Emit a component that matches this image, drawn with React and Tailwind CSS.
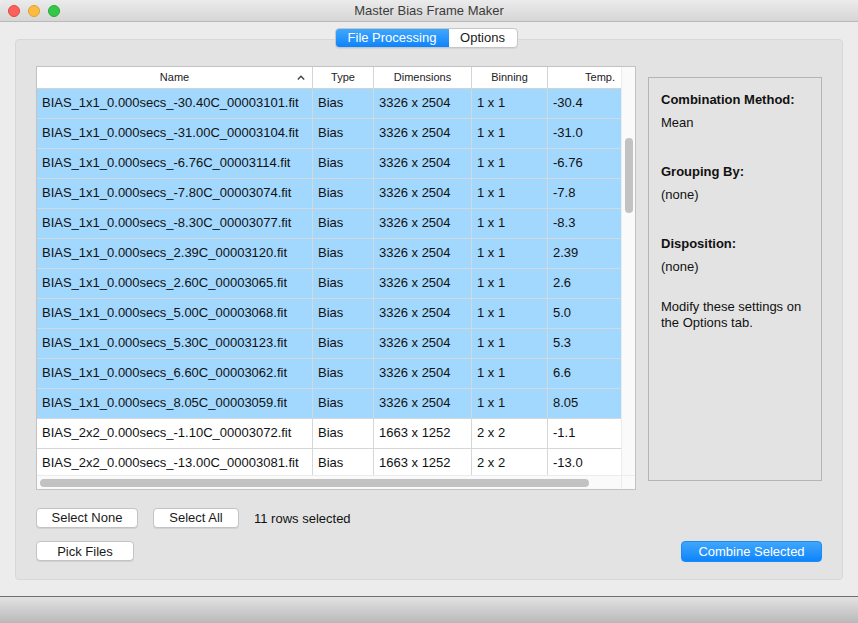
import React from "react"

const rows = [
  { name: "BIAS_1x1_0.000secs_-30.40C_00003101.fit", dim: "3326 x 2504", bin: "1 x 1", temp: "-30.4", sel: true },
  { name: "BIAS_1x1_0.000secs_-31.00C_00003104.fit", dim: "3326 x 2504", bin: "1 x 1", temp: "-31.0", sel: true },
  { name: "BIAS_1x1_0.000secs_-6.76C_00003114.fit", dim: "3326 x 2504", bin: "1 x 1", temp: "-6.76", sel: true },
  { name: "BIAS_1x1_0.000secs_-7.80C_00003074.fit", dim: "3326 x 2504", bin: "1 x 1", temp: "-7.8", sel: true },
  { name: "BIAS_1x1_0.000secs_-8.30C_00003077.fit", dim: "3326 x 2504", bin: "1 x 1", temp: "-8.3", sel: true },
  { name: "BIAS_1x1_0.000secs_2.39C_00003120.fit", dim: "3326 x 2504", bin: "1 x 1", temp: "2.39", sel: true },
  { name: "BIAS_1x1_0.000secs_2.60C_00003065.fit", dim: "3326 x 2504", bin: "1 x 1", temp: "2.6", sel: true },
  { name: "BIAS_1x1_0.000secs_5.00C_00003068.fit", dim: "3326 x 2504", bin: "1 x 1", temp: "5.0", sel: true },
  { name: "BIAS_1x1_0.000secs_5.30C_00003123.fit", dim: "3326 x 2504", bin: "1 x 1", temp: "5.3", sel: true },
  { name: "BIAS_1x1_0.000secs_6.60C_00003062.fit", dim: "3326 x 2504", bin: "1 x 1", temp: "6.6", sel: true },
  { name: "BIAS_1x1_0.000secs_8.05C_00003059.fit", dim: "3326 x 2504", bin: "1 x 1", temp: "8.05", sel: true },
  { name: "BIAS_2x2_0.000secs_-1.10C_00003072.fit", dim: "1663 x 1252", bin: "2 x 2", temp: "-1.1", sel: false },
  { name: "BIAS_2x2_0.000secs_-13.00C_00003081.fit", dim: "1663 x 1252", bin: "2 x 2", temp: "-13.0", sel: false },
]

const MacButton = ({ children, className = "" }) => (
  <button
    className={`h-[20px] rounded-[4px] bg-white border border-[#c3c3c3] shadow-[0_1px_0_rgba(0,0,0,0.08)] text-[13px] text-[#1a1a1a] leading-none ${className}`}
  >
    {children}
  </button>
)

const Row = ({ row }) => {
  const bg = row.sel ? "bg-[#a2d7fe]" : "bg-white"
  const line = row.sel ? "border-[#cfd9de]" : "border-[#d6d6d6]"
  return (
    <div className={`flex h-[30px] shrink-0 border-b ${line} ${bg} text-[13px] text-[#111]`}>
      <div className={`w-[276px] shrink-0 flex items-center pl-[5px] pb-[1px] border-r ${line}`}>{row.name}</div>
      <div className={`w-[61px] shrink-0 flex items-center pl-[5px] pb-[1px] border-r ${line}`}>Bias</div>
      <div className={`w-[98px] shrink-0 flex items-center pl-[5px] pb-[1px] border-r ${line}`}>{row.dim}</div>
      <div className={`w-[76px] shrink-0 flex items-center pl-[5px] pb-[1px] border-r ${line}`}>{row.bin}</div>
      <div className="flex-1 flex items-center pl-[5px] pb-[1px]">{row.temp}</div>
    </div>
  )
}

const App = () => {
  return (
    <div
      className="w-[858px] h-[623px] bg-[#ececec] flex flex-col overflow-hidden"
      style={{ fontFamily: "'Liberation Sans', Arial, sans-serif" }}
    >
      {/* Title bar */}
      <div className="h-[22px] shrink-0 flex items-center px-[8px] bg-gradient-to-b from-[#ebebeb] to-[#d6d6d6] border-b border-[#b9b9b9] rounded-t-[5px]">
        <div className="flex gap-[8px]">
          <span className="w-[12px] h-[12px] rounded-full bg-[#fc605c] border border-[#de4a45]" />
          <span className="w-[12px] h-[12px] rounded-full bg-[#fdbc40] border border-[#dea236]" />
          <span className="w-[12px] h-[12px] rounded-full bg-[#34c84a] border border-[#27aa35]" />
        </div>
        <div className="flex-1 text-center text-[13px] text-[#3c3c3c] pr-[52px] pt-[1px]">Master Bias Frame Maker</div>
      </div>

      {/* Main */}
      <div className="flex-1 min-h-0 flex flex-col items-center px-[15px] pt-[6px] pb-[16px]">
        {/* Tabs */}
        <div className="relative z-10 flex h-[20px] rounded-[4px] border border-[#c6c6c6] bg-white shadow-[0_1px_0_rgba(0,0,0,0.06)] text-[13px] overflow-hidden ml-[-6px]">
          <div className="w-[113px] flex items-center justify-center bg-gradient-to-b from-[#3ea6fb] to-[#0a84fb] text-white">
            File Processing
          </div>
          <div className="w-[68px] flex items-center justify-center text-[#1a1a1a]">Options</div>
        </div>

        {/* Group box */}
        <div className="self-stretch flex-1 min-h-0 -mt-[9px] rounded-[4px] bg-[#e3e3e3] border border-[#d8d8d8] flex flex-col px-[20px] pt-[26px] pb-[16px]">
          <div className="flex items-start">
            {/* Table */}
            <div className="w-[600px] h-[424px] shrink-0 bg-white border border-[#c2c2c2] flex overflow-hidden">
              <div className="flex-1 flex flex-col min-w-0">
                <div className="h-[22px] shrink-0 flex border-b border-[#d2d2d2] bg-white text-[11px] text-[#222]">
                  <div className="w-[276px] shrink-0 relative flex items-center justify-center border-r border-[#d4d4d4]">
                    Name
                    <svg className="absolute right-[7px] top-[8px]" width="8" height="5" viewBox="0 0 8 5">
                      <path d="M0.8 4.4 L4 1.2 L7.2 4.4" fill="none" stroke="#444" strokeWidth="1.4" />
                    </svg>
                  </div>
                  <div className="w-[61px] shrink-0 flex items-center justify-center border-r border-[#d4d4d4]">Type</div>
                  <div className="w-[98px] shrink-0 flex items-center justify-center border-r border-[#d4d4d4]">Dimensions</div>
                  <div className="w-[76px] shrink-0 flex items-center justify-center border-r border-[#d4d4d4]">Binning</div>
                  <div className="flex-1 flex items-center justify-end pr-[6px]">Temp.</div>
                </div>
                <div className="flex-1 flex flex-col overflow-hidden">
                  {rows.map((r) => (
                    <Row key={r.name} row={r} />
                  ))}
                </div>
                <div className="h-[14px] shrink-0 bg-[#fafafa] border-t border-[#ececec] flex items-center px-[3px]">
                  <div className="w-[549px] h-[8px] rounded-full bg-[#c2c2c2]" />
                </div>
              </div>
              <div className="w-[14px] shrink-0 bg-[#fafafa] border-l border-[#ececec] flex flex-col items-center">
                <div className="h-[71px] shrink-0" />
                <div className="w-[8px] h-[75px] rounded-full bg-[#c2c2c2]" />
                <div className="flex-1" />
                <div className="h-[14px] w-full border-t border-[#ececec]" />
              </div>
            </div>

            {/* Settings panel */}
            <div className="ml-[12px] mt-[11px] w-[176px] h-[404px] border border-[#b5b5b5] bg-[#e3e3e3] px-[12px] pt-[14px] text-[13px] text-[#111]">
              <div className="font-bold leading-[16px]">Combination Method:</div>
              <div className="mt-[7px] leading-[16px]">Mean</div>
              <div className="mt-[33px] font-bold leading-[16px]">Grouping By:</div>
              <div className="mt-[7px] leading-[16px]">(none)</div>
              <div className="mt-[33px] font-bold leading-[16px]">Disposition:</div>
              <div className="mt-[7px] leading-[16px]">(none)</div>
              <div className="mt-[24px] leading-[16px]">
                Modify these settings on
                <br />
                the Options tab.
              </div>
            </div>
          </div>

          {/* Buttons */}
          <div className="mt-[17px] flex items-center">
            <MacButton className="w-[102px]">Select None</MacButton>
            <MacButton className="w-[86px] ml-[15px]">Select All</MacButton>
            <span className="ml-[15px] text-[13px] text-[#111] pt-[2px]">11 rows selected</span>
          </div>
          <div className="mt-[12px] flex items-center justify-between">
            <MacButton className="w-[98px]">Pick Files</MacButton>
            <button className="w-[141px] h-[21px] rounded-[4px] bg-gradient-to-b from-[#3ea6fb] to-[#0a84fb] border border-[#1b8cf5] text-white text-[13px] leading-none">
              Combine Selected
            </button>
          </div>
        </div>
      </div>

      {/* Bottom bar */}
      <div className="h-[27px] shrink-0 bg-gradient-to-b from-[#e2e2e2] to-[#b9b9b9] border-t border-[#6e6e6e]" />
    </div>
  )
}

export default App
